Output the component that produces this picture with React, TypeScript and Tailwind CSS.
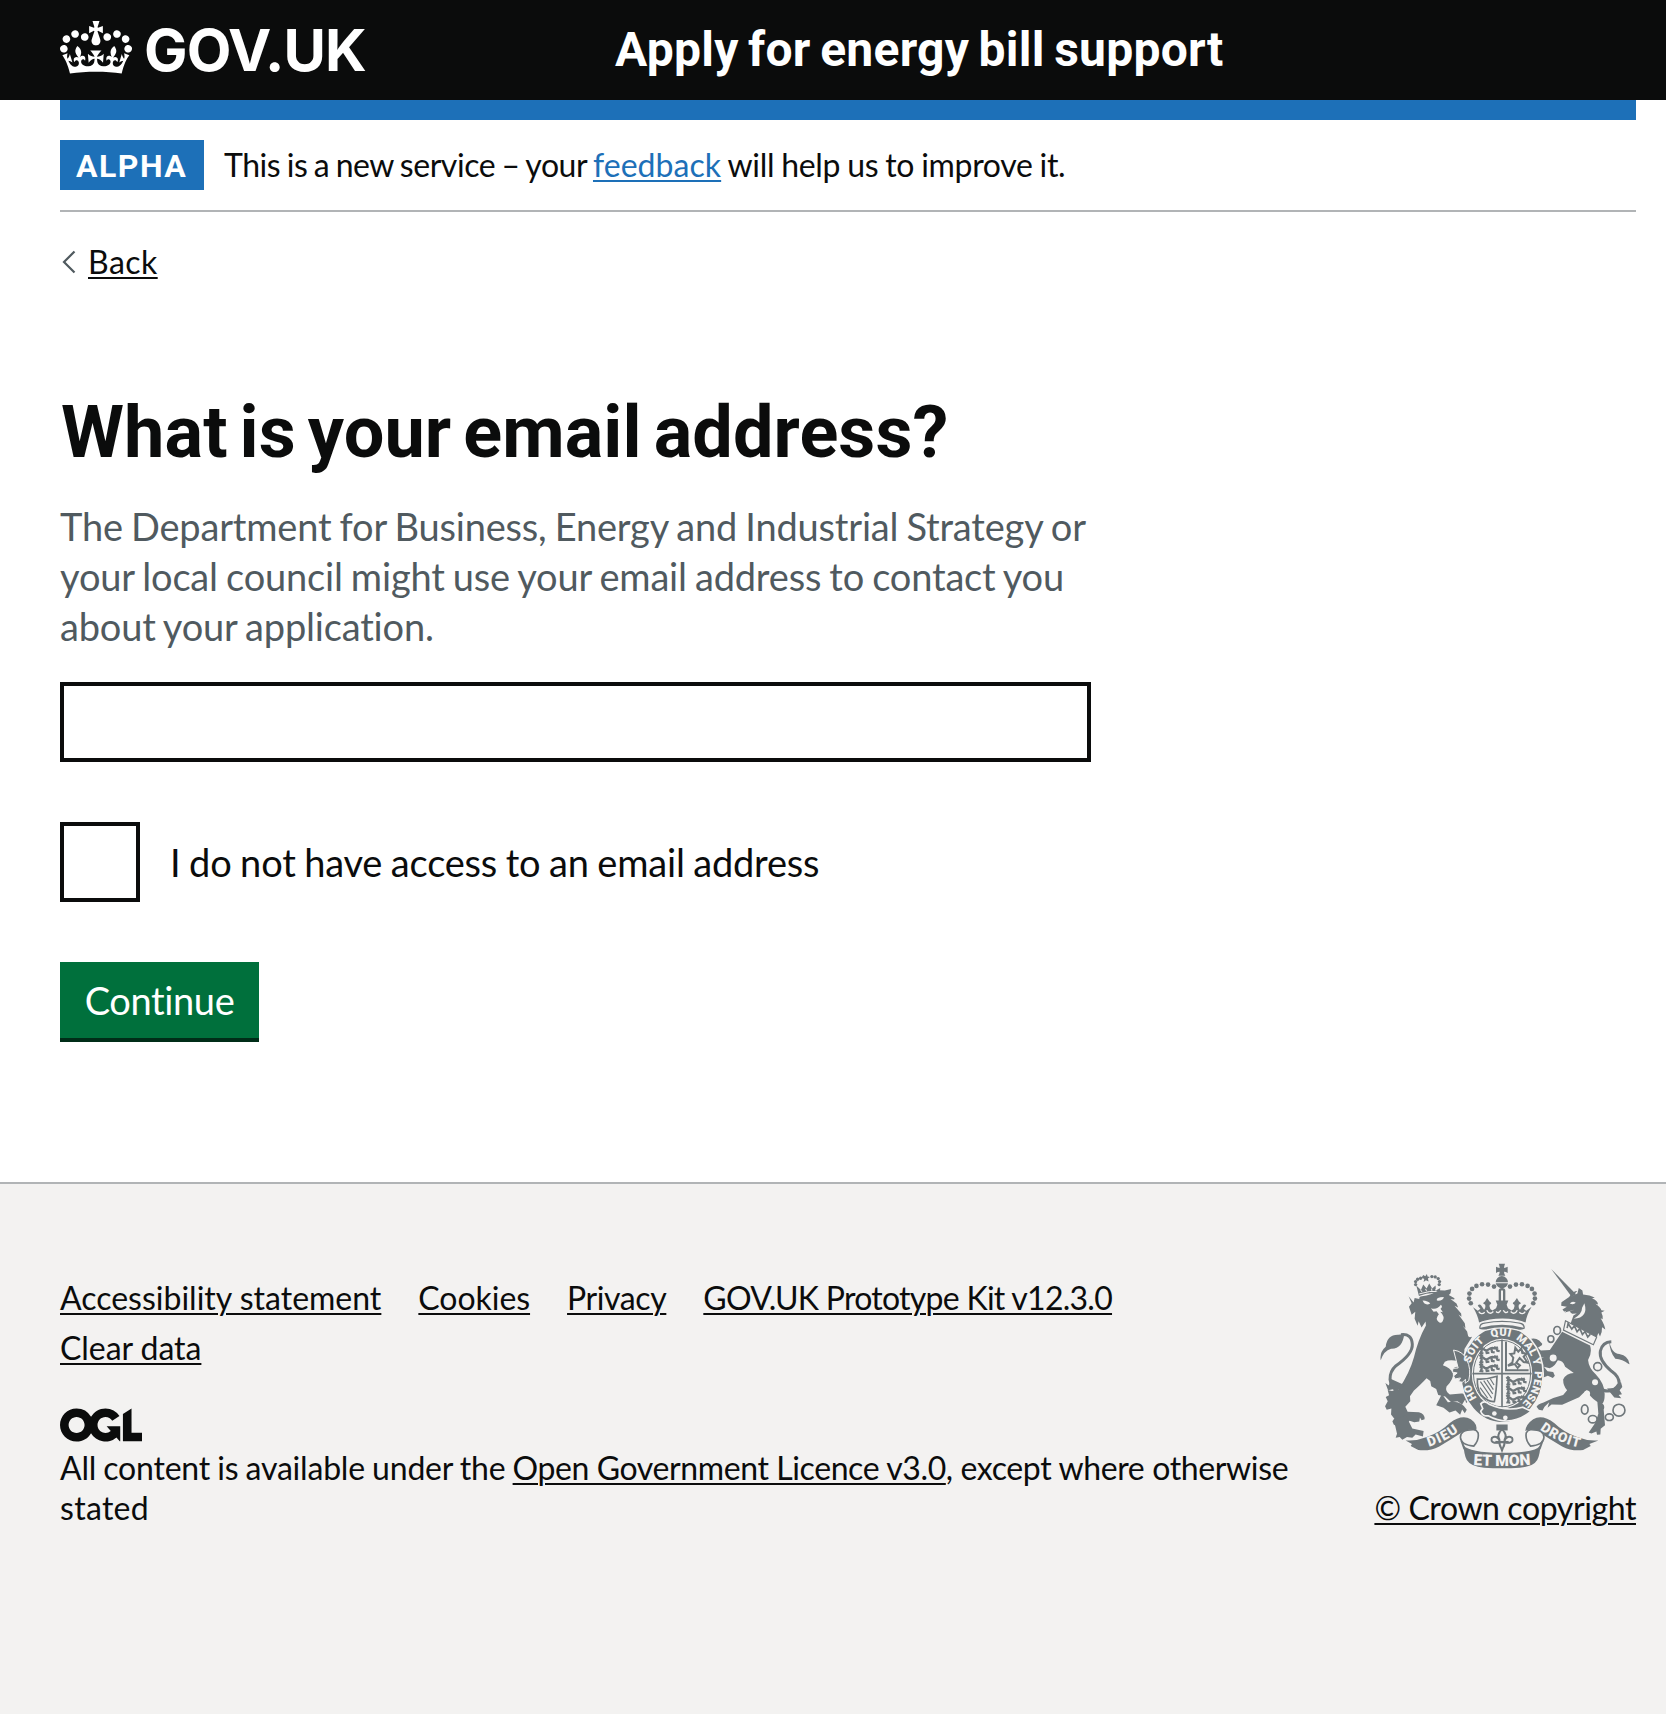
import React from "react";

const INK = "#6f777b";
const PAPER = "#f3f2f1";

function Crown() {
  return (
    <svg viewBox="0 0 132 97" className="h-[53px] w-[72px]" fill="currentColor" aria-hidden="true">
      <path d="M25 30.2c3.5 1.5 7.7-.2 9.1-3.7 1.5-3.6-.2-7.8-3.9-9.2-3.6-1.4-7.6.3-9.1 3.9-1.4 3.5.3 7.5 3.9 9zM9 39.5c3.6 1.5 7.8-.2 9.2-3.7 1.5-3.6-.2-7.8-3.9-9.1-3.6-1.5-7.6.2-9.1 3.8-1.4 3.5.3 7.5 3.8 9zM4.4 57.2c3.5 1.5 7.7-.2 9.1-3.8 1.5-3.6-.2-7.7-3.9-9.1-3.5-1.5-7.6.3-9.1 3.8-1.4 3.5.3 7.6 3.9 9.1zm38.3-21.4c3.5 1.5 7.7-.2 9.1-3.8 1.5-3.6-.2-7.7-3.9-9.1-3.6-1.5-7.6.3-9.1 3.8-1.3 3.6.4 7.7 3.9 9.1zm64.4-5.6c-3.6 1.5-7.8-.2-9.1-3.7-1.5-3.6.2-7.8 3.8-9.2 3.6-1.4 7.7.3 9.2 3.9 1.3 3.5-.4 7.5-3.9 9zm15.9 9.3c-3.6 1.5-7.7-.2-9.1-3.7-1.5-3.6.2-7.8 3.7-9.1 3.6-1.5 7.7.2 9.2 3.8 1.5 3.5-.3 7.5-3.8 9zm4.7 17.7c-3.6 1.5-7.8-.2-9.2-3.8-1.5-3.6.2-7.7 3.9-9.1 3.6-1.5 7.7.3 9.2 3.8 1.3 3.5-.4 7.6-3.9 9.1zM89.3 35.8c-3.6 1.5-7.8-.2-9.2-3.8-1.4-3.6.2-7.7 3.9-9.1 3.6-1.5 7.7.3 9.2 3.8 1.4 3.6-.3 7.7-3.9 9.1zM69.7 17.7l8.9 4.7V9.3l-8.9 2.8c-.2-.3-.5-.6-.9-.9L72.4 0H59.6l3.5 11.2c-.3.3-.6.5-.9.9l-8.8-2.8v13.1l8.8-4.7c.3.3.6.7.9.9l-5 15.4v.1c-.2.8-.4 1.6-.4 2.4 0 4.1 3.1 7.5 7 8.1h.2c.3 0 .7.1 1 .1.4 0 .7 0 1-.1h.2c4-.6 7.1-4.1 7.1-8.1 0-.8-.1-1.7-.4-2.4V34l-5.1-15.4c.4-.2.7-.6 1-.9zM66 92.8c16.9 0 32.8 1.1 47.1 3.2 4-16.9 8.9-26.7 14-33.5l-9.6-3.4c1 4.9 1.1 7.2 0 10.2-1.5-1.4-3-4.3-4.2-8.7L108.6 76c2.8-2 5-3.2 7.5-3.3-4.4 9.4-10 11.9-13.6 11.2-4.3-.8-6.3-4.6-5.6-7.9 1-4.7 5.7-5.9 8-.5 4.3-8.7-3-11.4-7.6-8.8 7.1-7.2 7.9-13.5 2.1-21.1-8 6.1-8.1 12.3-4.5 20.8-4.7-5.4-12.1-2.5-9.5 6.2 3.4-5.2 7.9-2 7.2 3.1-.6 4.3-6.4 7.8-13.5 7.2-10.3-.9-10.9-8-11.2-13.8 2.5-.5 7.1 1.8 11 7.3L80.2 60c-4.1 4.4-8 5.3-12.3 5.4 1.4-4.4 8-11.6 8-11.6H55.5s6.4 7.2 7.9 11.6c-4.2-.1-8-1-12.3-5.4l1.4 16.4c3.9-5.5 8.5-7.7 10.9-7.3-.3 5.8-.9 12.8-11.1 13.8-7.2.6-12.9-2.9-13.5-7.2-.7-5 3.8-8.3 7.1-3.1 2.7-8.7-4.6-11.6-9.4-6.2 3.7-8.5 3.6-14.7-4.6-20.8-5.8 7.6-5 13.9 2.2 21.1-4.7-2.6-11.9.1-7.7 8.8 2.3-5.5 7.1-4.2 8.1.5.7 3.3-1.3 7.1-5.7 7.9-3.5.7-9-1.8-13.5-11.2 2.5.1 4.7 1.3 7.5 3.3l-4.7-15.4c-1.2 4.4-2.7 7.2-4.3 8.7-1.1-3-.9-5.3 0-10.2l-9.5 3.4c5 6.9 9.9 16.7 14 33.5 14.8-2.1 30.8-3.2 47.7-3.2z" />
    </svg>
  );
}

function OglLogo() {
  return (
    <svg viewBox="0 0 483.2 195.7" className="block h-[34px] w-[82px]" fill="currentColor" aria-hidden="true">
      <path d="M421.5 142.8V.1l-50.7 32.3v161.1h112.4v-50.7zm-122.3-9.6A47.12 47.12 0 0 1 221 97.8c0-26 21.1-47.1 47.1-47.1 16.7 0 31.4 8.7 39.7 21.8l42.7-27.2A97.63 97.63 0 0 0 268.1 0c-36.5 0-68.3 20.1-85.1 49.7A98 98 0 0 0 97.8 0C43.9 0 0 43.9 0 97.8s43.9 97.8 97.8 97.8c36.5 0 68.3-20.1 85.1-49.7a97.76 97.76 0 0 0 149.6 25.4l19.4 22.2h3v-87.8h-80l24.3 27.5zM97.8 145c-26 0-47.1-21.1-47.1-47.1s21.1-47.1 47.1-47.1 47.1 21.1 47.1 47.1S123.8 145 97.8 145" />
    </svg>
  );
}

const crownBeads: [number, number][] = [
  [402, 109], [384, 103], [366, 102], [349, 107], [336, 116], [328, 130], [327, 145], [332, 159],
];

/* One three-lion quarter of the shield. */
function Lions({ x, y }: { x: number; y: number }) {
  return (
    <g transform={`translate(${x} ${y})`} fill="none" stroke={INK} strokeWidth="7">
      {[0, 27, 54].map((dy) => (
        <g key={dy} transform={`translate(0 ${dy})`}>
          <path d="M4 12q6-8 12-2t14 0 14-4 14-2M10 12l-4 9 8 1M22 12l2 9 8-1M38 8l2 10 8 1M52 4l4 10 7 1M46 2l6 6M2 4l5-4 5 4" />
        </g>
      ))}
    </g>
  );
}

function RoyalArms() {
  return (
    <svg viewBox="60 38 750 620" className="block h-[206px] w-[250px]" fill={INK} fontFamily="Roboto, sans-serif" fontWeight="900" aria-hidden="true">
      {/* lion's crown */}
      <path d="M176 137l-8-31 14 13 7-16 10 12 8-15 9 15 10-9 1 15 13-8-1 17q-32-5-63 7z" />
      <path d="M177 131q32-11 62-7M181 119l4 6m11-9l3 7m15-8l1 7m12-6v5" stroke={PAPER} strokeWidth="3" fill="none" />
      <path d="M189 74l6 4 5-7 2 8 7 1-6 5 2 9-8-4-7 5 2-9-8-4z" />
      {[[166, 103], [166, 94], [172, 87], [181, 84], [215, 79], [225, 80], [234, 85], [238, 94], [237, 103]].map(([x, y]) => (
        <circle key={`${x}-${y}`} cx={x} cy={y} r="5" />
      ))}

      {/* lion */}
      <path d="M160 157l3-14 14 3q-1-7 8-8 28-3 51-18l18 1 19-5-2 13-5 5 17 10-1 4-11-2 18 14 5 12-11-5 20 23 1 10-9-7 19 26 2 16-9-9 14 18 3 14q2 5 12 2l-23 37-1 18q22 5 24 33l-6 47-14 12 4-15-14 12-3-8 6-12-17 3-4-9 10-11-17-4 2-11 17-3-8-16q-24-5-38 2l-6 11q23 8 30 24 4 16-19 40-5 14 10 24l35-3q23-1 24 21l-10 7-3-10-9 15-14-10-19 3-18-17-21-5-6-18-15-8-3-16-11-8q-23 24-38 37l-12 17 1 15-15 17 7 15 34 1q18 4 17 21l-9 3-5-8-2 12-15 2-14-4-12 10-16 1-9 6-11-6-4-10 6-7-10-13 1-18-14 4-5-11 8-15-6-13 10-5-4-16 13 3 20-5q33-49 46-96 12-53 36-96l-1-12-12 18-9-19-3 14-9-21 2-21-11 9-8-24 8-11-9-21z" />
      <path d="M245 432l18 25q40-8 57 23l-6 10-8-11-6 16-14-13-18 6-18-14-22-8z" />
      <path d="M100 508l10 44-4 12 12-2 8 8 14-8 16 2 10-10 22 6 2-16-34-8-20-40z" />
      <path d="M187 151q17 1 23 9-16 8-23-9zM230 151q-4-11 21-11-3 13-21 11z" fill={PAPER} />
      <path d="M212 174q18 6 30-10 7 6-1 12l7 10-8-1q16 15 7 29-6 8-13 0-10-8 2-22l-7-9-9 2z" fill={PAPER} />
      <path d="M128 410q-34 12-39-21-1-25 18-42 51-36 49-65-2-32-34-28" fill="none" stroke={INK} strokeWidth="9" />
      <path d="M132 252q-6 46-40 44-22 6-31 35-4-25 15-41 4-37 38-36z" />
      <path d="M92 387l-7 20-10-8 8 22 15-3 4 9 20-13 10-9z" />

      {/* unicorn */}
      <path d="M574 56l75 76-13 8z" />
      <path d="M635 139l18-9 4-17 11 8 2 12q21 2 35 9l-8 3q17 6 18 18l-8-2q16 11 18 19l10 2-10 5q5 9 4 20l-6-3q12 21 14 34l-10-7q1 15-6 28l-5-10-8 19-78-41 11-31 10-6-14 1-8-7 17-6-31 9-7-9 13-8-17-3 1-11 23-16q11-18 25-18z" />
      <path d="M630 160q8-9 18-2-7 7-18 2zM674 159q13 43-32 47 25-14 25-33zM605 188l15-6-11 11z" fill={PAPER} />
      <path d="M617 212l94 49-10 23-90-44z" fill={PAPER} stroke={INK} strokeWidth="3.5" />
      <path d="M622 234l3-14 11 17 8-10 8 18 8-10 8 18 8-9 8 17 8-9" fill="none" stroke={INK} strokeWidth="5" />
      <path d="M607 245l84 41q7 22-6 44 2 24 23 43 27 28 27 60 0 22-7 28 9 6 4 18l4 47-13 11-1 17-10 1-2-10-15 6-8-3 20-29 9-27-3-36q-26-17-31-36-11 8-24 22l-51 23-32-1-12 10 5-17-14 14-6 11-11-2-7-9q2-7 21-13 28-16 59-23l12-14q-12-12-12-32 9-20 32-20l-26-19q-7-20-24-19-5 19-23 24l-17-5 11 14 17 2 5 11-6 7-15-7-16 6-10-10-7-31 7-15 15-5-29 4-15-8-7-12-13-6 12-11q0-16 8-21 15-6 29 3l11 12-15 10 9 8 27-1z" />
      <path d="M533 261l29 8m-14 12q10 30 26 1" stroke={PAPER} strokeWidth="4" fill="none" />
      <path d="M731 421q30 10 48-20-1-22-23-37-39-32-34-61 6-27 33-28" fill="none" stroke={INK} strokeWidth="9" />
      <path d="M748 270q8 42 31 42 28 5 31 31l-4-2q-17-13-39-15-17-19-19-56zM742 416l22 27 21 2-8-10 10-2-7-12 8-10-4-15-16 18z" />

      {/* royal crown */}
      <path d="M416 40h19q-3 8-3 13 6-1 11-4v19q-5-4-11-4 0 6 4 12h-21q4-6 4-12-6 0-11 4V49q5 3 11 4 0-6-3-13z" />
      <path d="M407 96a18 18 0 0 1 37 0zM407 99h37q-3 13-18 16-15-3-19-16z" />
      <path d="M416 121q0-8 10-8t10 8v32h-7v-32h-6v32h-7z" />
      {crownBeads.map(([x, y]) => (
        <g key={x}>
          <circle cx={x} cy={y} r="7" />
          <circle cx={852 - x} cy={y} r="7" />
        </g>
      ))}
      <path d="M337 170l16 12 8-6-8-9q5-8 11 0l8 12q6-7 3-16-11-3 0-9l6-11 8 12q9 4 0 9-3 11 8 17l11-7 4-10-5-13h38l-5 13 4 10 11 7q11-6 8-17-9-5 0-9l8-12 6 11q11 6 0 9-3 9 3 16l8-12q6-8 11 0l-8 9 8 6 16-12q-15 25-18 47-30-12-70-12t-70 12q-4-22-19-47z" />
      <path d="M356 184q8 12 18 2M380 180q8 16 20 4M452 184q12 12 20-4M478 186q10 10 18-2M408 184q8 8 14-4m8 0q6 12 14 4" fill="none" stroke={PAPER} strokeWidth="4" />

      {/* garter and shield */}
      <ellipse cx="426" cy="373" rx="124" ry="146" stroke={PAPER} strokeWidth="5" />
      <path d="M355 236q0-21 19-21 52-11 104 0 19 0 19 21-10 8-26 3-45-12-90 0-19 4-26-3z" fill={INK} stroke={PAPER} strokeWidth="4" />
      <path d="M361 233q0-12 16-13 49-9 98 0 14 1 16 13-65-18-130 0z" fill={PAPER} />
      <ellipse cx="426" cy="371" rx="91" ry="105" fill={PAPER} />
      <ellipse cx="426" cy="371" rx="86" ry="100" fill="none" stroke={INK} strokeWidth="3" />
      <path d="M426 268v205M337 371h178" stroke={INK} strokeWidth="5" fill="none" />
      <Lions x={356} y={288} />
      <Lions x={437} y={382} />
      <path d="M438 275v86h68M444 347l13-9 3-15-9-11 12-2 3-17 9 12 9-10 3 14 13 2-9 9 12 18-12-2-12-12-10 14 11 8-7 8-9-12z" fill="none" stroke={INK} strokeWidth="6" />
      <path d="M352 387q29 2 59-8-2 47-8 76-19 2-40-20-13-20-11-48z" fill="none" stroke={INK} strokeWidth="5" />
      <path d="M361 395l34 50m-24-53l27 40m-17-42l19 29m-9-32l11 18m-42 8l23 32" stroke={INK} strokeWidth="3.5" fill="none" />
      <path d="M362 462q10-13 27 2 50 22 99 8l26 12q-62 51-130 14-17 2-22-14l6-8z" stroke={PAPER} strokeWidth="5" />
      <circle cx="403" cy="491" r="7" fill={PAPER} />
      <circle cx="436" cy="504" r="7" fill={PAPER} />
      <path d="M280 300q30 4 40 30 14 26 6 62l-11 8 1-12-9 9-12-2 6-11-16 3-5-9 11-9-15-3 3-11 15-1z" stroke={PAPER} strokeWidth="3" />
      <path id="garter-line" d="M426 485A98 114 0 0 1 426 257A98 114 0 0 1 426 485" fill="none" />
      <g fill={PAPER} fontSize="33" textAnchor="middle">
        <text><textPath href="#garter-line" startOffset="112">HO</textPath></text>
        <text letterSpacing="2"><textPath href="#garter-line" startOffset="238">SOIT</textPath></text>
        <text letterSpacing="1"><textPath href="#garter-line" startOffset="330">QUI</textPath></text>
        <text letterSpacing="1"><textPath href="#garter-line" startOffset="412">MAL</textPath></text>
        <text><textPath href="#garter-line" startOffset="465">Y</textPath></text>
        <text letterSpacing="1"><textPath href="#garter-line" startOffset="546">PENSE</textPath></text>
      </g>

      {/* pendant */}
      <path d="M409 524h34v18h-34z" />
      <path d="M426 538q-18 18-7 34-10-17-23-8-6 11 7 15 14 2 16-7-2 14 4 22l3 8 3-8q6-8 4-22 3 9 16 7 13-4 7-15-13-9-23 8 11-16-7-34z" fill={PAPER} stroke={INK} strokeWidth="6" />
      <path d="M406 577h40" stroke={INK} strokeWidth="7" />

      {/* chain */}
      <g fill={PAPER} stroke={INK} strokeWidth="5">
        <ellipse cx="592" cy="241" rx="10" ry="12" />
        <ellipse cx="573" cy="267" rx="9" ry="10" />
        <circle cx="580" cy="324" r="13" />
        <circle cx="714" cy="350" r="12" />
        <ellipse cx="675" cy="479" rx="10" ry="14" />
        <ellipse cx="699" cy="508" rx="13" ry="11" />
        <ellipse cx="749" cy="502" rx="12" ry="10" />
        <circle cx="778" cy="481" r="18" />
      </g>
      <circle cx="706" cy="397" r="9" fill={PAPER} />
      <circle cx="682" cy="431" r="9" fill={PAPER} />

      {/* motto ribbon */}
      <path d="M136 572q31 3 64-10 43-17 68-42 37-28 64-12 22 15 16 36-16-8-36 0-38 25-75 46-28 15-63 11l-23-12 4-6z" />
      <path d="M716 572q-31 3-64-10-43-17-68-42-37-28-64-12-22 15-24 36 16-8 36 0 38 25 75 46 28 15 63 11l23-12-4-6z" />
      <path d="M341 540q-42-1-40 24 2 22 40 25 17-18 13-40-4-8-13-9zM512 540q42-1 40 24-2 22-40 25-17-18-13-40 4-8 13-9z" fill={PAPER} stroke={INK} strokeWidth="5" />
      <path d="M311 587q15 21 115 22t115-22q0 26-9 44-12 20-52 23-54 3-108 0-40-3-52-23-9-18-9-44z" />
      <path d="M304 573l9 25M548 573l-9 25" stroke={INK} strokeWidth="6" />
      <path id="motto-left" d="M190 595Q255 580 312 533" fill="none" />
      <path id="motto-right" d="M532 533Q593 582 670 596" fill="none" />
      <path id="motto-mid" d="M320 644Q426 654 532 644" fill="none" />
      <g fill={PAPER} fontSize="41" textAnchor="middle">
        <text letterSpacing="4"><textPath href="#motto-left" startOffset="50%">DIEU</textPath></text>
        <text letterSpacing="3"><textPath href="#motto-right" startOffset="50%">DROIT</textPath></text>
        <text fontSize="47"><textPath href="#motto-mid" startOffset="50%">ET MON</textPath></text>
      </g>
    </svg>
  );
}

const link = "underline decoration-2 underline-offset-[3px]";

export default function App() {
  return (
    <div className="flex min-h-[1714px] flex-col bg-white font-['Lato',sans-serif] text-[32px] leading-[40px] text-[#0b0c0c]">
      <header className="flex h-[100px] bg-[#0b0c0c] px-[60px] text-white">
        <div className="flex w-[555px] pt-[21px]">
          <Crown />
          <span className="ml-[12px] h-[60px] font-['Inter',sans-serif] text-[58px] leading-[58px] font-bold tracking-[-0.9px]">GOV.UK</span>
        </div>
        <div className="pt-[20px] font-['Roboto',sans-serif] text-[48px] leading-[60px] font-bold tracking-[0.25px] [word-spacing:-2.7px] whitespace-nowrap">
          Apply for energy bill support
        </div>
      </header>

      <div className="mr-[30px] ml-[60px] h-[20px] bg-[#1d70b8]" />

      <div className="mr-[30px] ml-[60px] flex h-[92px] border-b-2 border-[#b1b4b6] pt-[20px]">
        <strong className="h-[50px] w-[144px] bg-[#1d70b8] pl-[16px] font-['Roboto',sans-serif] leading-[52px] font-bold tracking-[1.5px] text-white">ALPHA</strong>
        <p className="ml-[20px] leading-[49px] whitespace-pre">
          <span className="tracking-[-0.45px] [word-spacing:-1.3px]">This is a new service – your </span>
          <a href="#" className={`tracking-[0.05px] text-[#1d70b8] ${link}`}>feedback</a>
          <span className="tracking-[-0.33px] [word-spacing:-0.8px]"> will help us to improve it.</span>
        </p>
      </div>

      <main className="mr-[30px] ml-[60px] flex h-[970px] flex-col items-start">
        <a href="#" className="mt-[30px] flex items-center">
          <svg viewBox="0 0 28 40" className="h-[40px] w-[28px]" fill="none" stroke="#505a5f" strokeWidth="2.2" aria-hidden="true">
            <path d="M14.5 9.500L4 20l10.500 10.500" />
          </svg>
          <span className={`tracking-[0.45px] ${link}`}>Back</span>
        </a>

        <h1 className="mt-[111px] ml-px font-['Roboto',sans-serif] text-[72px] leading-[80px] font-bold tracking-[0.1px] [word-spacing:-6px]">
          What is your email address?
        </h1>

        <p className="mt-[28px] text-[38px] leading-[50px] tracking-[-0.18px] [word-spacing:-1.4px] text-[#505a5f]">
          The Department for Business, Energy and Industrial Strategy or
          <br />
          your local council might use your email address to contact you
          <br />
          about your application.
        </p>

        <input type="text" aria-label="Email address" className="mt-[31px] h-[80px] w-[1031px] border-4 border-[#0b0c0c] bg-white outline-none" />

        <label className="mt-[60px] flex h-[80px]">
          <input type="checkbox" className="size-[80px] appearance-none border-4 border-[#0b0c0c] bg-white" />
          <span className="ml-[30px] text-[38px] leading-[81px] tracking-[-0.2px] [word-spacing:-0.9px]">I do not have access to an email address</span>
        </label>

        <button className="mt-[60px] h-[80px] w-[199px] border-b-4 border-[#002d18] bg-[#00703c] text-[38px] leading-[75px] tracking-[-0.38px] text-white">
          Continue
        </button>
      </main>

      <footer className="flex grow items-start justify-between border-t-2 border-[#b1b4b6] bg-[#f3f2f1] pr-[30px] pl-[60px]">
        <div className="pt-[89px]">
          <ul className="flex w-[1240px] flex-wrap gap-x-[37px] leading-[50px]">
            <li><a href="#" className={link}>Accessibility statement</a></li>
            <li><a href="#" className={`tracking-[-0.05px] ${link}`}>Cookies</a></li>
            <li><a href="#" className={`tracking-[-0.4px] ${link}`}>Privacy</a></li>
            <li className="mr-40"><a href="#" className={`tracking-[-0.73px] ${link}`}>GOV.UK Prototype Kit v12.3.0</a></li>
            <li><a href="#" className={`tracking-[-0.05px] ${link}`}>Clear data</a></li>
          </ul>
          <div className="mt-[35px]">
            <OglLogo />
          </div>
          <p className="mt-[6px] whitespace-pre">
            <span className="tracking-[-0.2px] [word-spacing:-0.8px]">All content is available under the </span>
            <a href="#" className={`tracking-[-0.4px] ${link}`}>Open Government Licence v3.0</a>
            <span className="tracking-[-0.37px]">, except where otherwise</span>
            <br />
            <span className="tracking-[0.3px]">stated</span>
          </p>
        </div>
        <div className="flex flex-col items-end pt-[79px]">
          <div className="mr-[6px]">
            <RoyalArms />
          </div>
          <a href="#" className={`mt-[19px] tracking-[-0.4px] whitespace-nowrap ${link}`}>© Crown copyright</a>
        </div>
      </footer>
    </div>
  );
}
